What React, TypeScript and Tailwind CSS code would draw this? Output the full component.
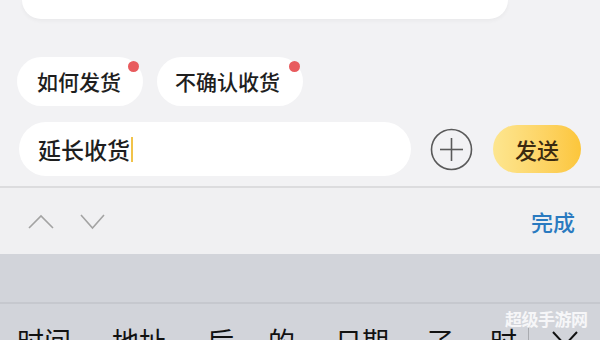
import React from "react";

const font = { fontFamily: '"Noto Sans CJK SC", "Noto Sans", sans-serif' };

export default function App() {
  return (
    <div
      className="relative w-[600px] h-[340px] overflow-hidden bg-[#f2f2f4] flex flex-col text-[#1e1e1e]"
      style={font}
    >
      {/* top card remnant */}
      <div className="h-[19px] shrink-0 flex">
        <div className="ml-[22px] w-[486px] h-full bg-white rounded-b-[24px] shadow-[0_2px_4px_rgba(0,0,0,0.04)]" />
      </div>

      {/* quick chips */}
      <div className="mt-[38px] shrink-0 flex pl-[17px] gap-[14px]">
        <div className="relative h-[49px] pl-[20px] pr-[22px] rounded-full bg-white flex items-center text-[21px] leading-none font-medium">
          如何发货
          <span className="absolute right-[4px] top-[4px] w-[11px] h-[11px] rounded-full bg-[#e85b5e]" />
        </div>
        <div className="relative h-[49px] pl-[18px] pr-[23px] rounded-full bg-white flex items-center text-[21px] leading-none font-medium">
          不确认收货
          <span className="absolute right-[3px] top-[4px] w-[11px] h-[11px] rounded-full bg-[#e85b5e]" />
        </div>
      </div>

      {/* input row */}
      <div className="mt-[16px] shrink-0 flex items-center">
        <div className="ml-[19px] w-[392px] h-[54px] rounded-full bg-white flex items-center pl-[19px] text-[23px] leading-none font-medium">
          延长收货
          <span className="ml-[1px] w-[2px] h-[25px] bg-[#f1c34a]" />
        </div>
        <svg className="ml-[19px]" width="43" height="43" viewBox="0 0 43 43">
          <circle cx="21.5" cy="21.5" r="20" fill="none" stroke="#5a5a5a" strokeWidth="1.6" />
          <line x1="10" y1="21.5" x2="33" y2="21.5" stroke="#5a5a5a" strokeWidth="1.6" />
          <line x1="21.5" y1="10" x2="21.5" y2="33" stroke="#5a5a5a" strokeWidth="1.6" />
        </svg>
        <div className="ml-[20px] w-[88px] h-[48px] rounded-full bg-gradient-to-r from-[#fde68f] to-[#fcc63a] flex items-center justify-center text-[22px] leading-none font-medium text-[#3b2a10]">
          发送
        </div>
      </div>

      {/* separator */}
      <div className="mt-[10px] h-[2px] shrink-0 bg-[#dcdcde]" />

      {/* toolbar */}
      <div className="h-[66px] shrink-0 bg-[#f0f0f2] flex items-center pl-[28px] pr-[25px]">
        <svg width="28" height="15" viewBox="0 0 28 15">
          <polyline points="1,14 13,2 25,14" fill="none" stroke="#a3a3a3" strokeWidth="1.6" />
        </svg>
        <svg className="ml-[24px]" width="26" height="17" viewBox="0 0 26 17">
          <polyline points="1,2 12.5,15 24,2" fill="none" stroke="#a3a3a3" strokeWidth="1.6" />
        </svg>
        <div className="ml-auto text-[22px] leading-none font-medium text-[#2a7ac0]">完成</div>
      </div>

      {/* keyboard */}
      <div className="flex-1 min-h-0 overflow-hidden bg-[#d2d4da] flex flex-col">
        <div className="h-[48px] shrink-0" />
        <div className="h-[2px] shrink-0 bg-[#c6c8ce]" />
        <div className="shrink-0 flex items-start pt-[23px] pl-[17px] text-[27px] leading-none text-[#111]">
          <span>时间</span>
          <span className="ml-[41px]">地址</span>
          <span className="ml-[41px]">后</span>
          <span className="ml-[34px]">的</span>
          <span className="ml-[40px]">日期</span>
          <span className="ml-[38px]">了</span>
          <span className="ml-[36px]">时</span>
          <span className="ml-[11px] mt-[0px] w-[1px] h-[20px] bg-[#a9abb0]" />
          <svg className="ml-[23px] mt-[4px]" width="26" height="20" viewBox="0 0 26 20">
            <polyline points="1,1 13,14 25,1" fill="none" stroke="#111" strokeWidth="2" />
          </svg>
        </div>
      </div>

      {/* watermark */}
      <div className="absolute left-[505px] top-[310px] text-[17px] leading-none font-bold text-white/80 tracking-[-0.5px]">
        超级手游网
      </div>
    </div>
  );
}
